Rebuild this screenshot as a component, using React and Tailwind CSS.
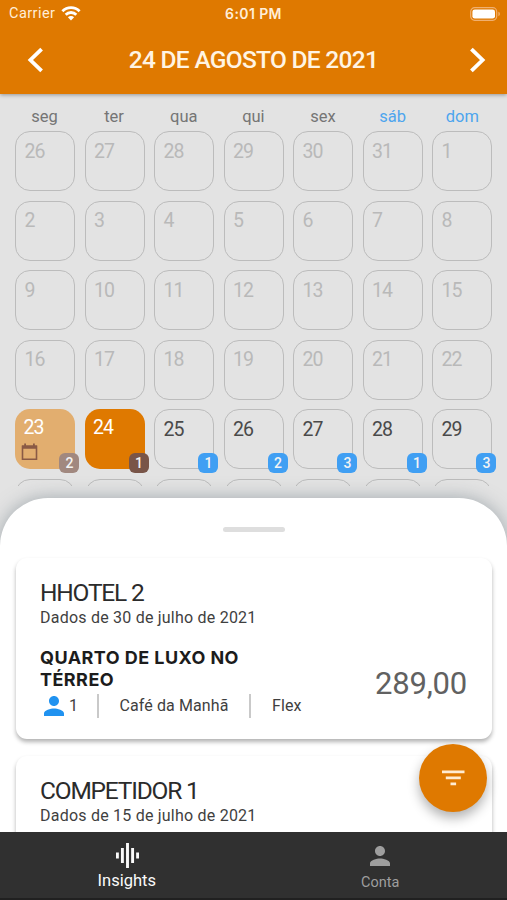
import React, { useState } from "react";
import { MdPerson } from "react-icons/md";

const WEEKDAYS = ["seg", "ter", "qua", "qui", "sex", "sáb", "dom"];

const DAYS = [
  26, 27, 28, 29, 30, 31, 1,
  2, 3, 4, 5, 6, 7, 8,
  9, 10, 11, 12, 13, 14, 15,
  16, 17, 18, 19, 20, 21, 22,
].map((day) => ({ day, type: "past" }));

const CURRENT_WEEK = [
  { day: 23, type: "today", count: 2 },
  { day: 24, type: "selected", count: 1 },
  { day: 25, type: "open", count: 1 },
  { day: 26, type: "open", count: 2 },
  { day: 27, type: "open", count: 3 },
  { day: 28, type: "open", count: 1 },
  { day: 29, type: "open", count: 3 },
];

// Placeholder cells that peek out above the sheet
const NEXT_WEEK = Array.from({ length: 7 }, () => ({ type: "open" }));

const CELL_STYLES = {
  past: "border border-[#bcbcbc] text-[#b9b9b9] pl-[8px] pt-[8.5px]",
  open: "border border-[#bcbcbc] text-[#4a4a4a] pl-[8px] pt-[8.5px]",
  today: "bg-[#e2ae6f] text-white pl-[8px] pt-[8px]",
  selected: "bg-[#df7900] text-white pl-[8px] pt-[8px]",
};

const BADGE_STYLES = {
  open: "bg-[#409ff3]",
  today: "bg-[#a1887f]",
  selected: "bg-[#795548]",
};

function StatusBar() {
  return (
    <div className="grid h-[27px] grid-cols-3 items-center pl-[9px] pr-[6px] text-[#ffeed8]">
      <div className="flex items-center gap-[6px] text-[14.5px] tracking-[0.45px]">
        Carrier
        <svg width="20" height="15" viewBox="0 0 20 15" fill="none" stroke="#fff" strokeWidth="2.8">
          <path d="M1.4 5.2a12.2 12.2 0 0 1 17.2 0" />
          <path d="M4.7 8.7a7.5 7.5 0 0 1 10.6 0" />
          <path d="M10 14.4 6.9 11.2a4.4 4.4 0 0 1 6.2 0z" fill="#fff" stroke="none" />
        </svg>
      </div>
      <div className="-ml-[3px] whitespace-nowrap text-center font-['Inter',sans-serif] text-[14px] font-semibold tracking-[0.4px]">
        6:01 PM
      </div>
      <div className="flex justify-end">
        <svg width="31" height="14" viewBox="0 0 31 14">
          <rect x="0.7" y="0.7" width="26" height="12.6" rx="4" fill="none" stroke="#f0b070" strokeWidth="1.2" />
          <rect x="2.4" y="2.4" width="22.6" height="9.2" rx="2.4" fill="#fff" />
          <path d="M28.4 4.8c2 .6 2 3.8 0 4.4z" fill="#f0b070" />
        </svg>
      </div>
    </div>
  );
}

function Header() {
  return (
    <header className="relative z-10 h-[94px] shrink-0 bg-[#df7900] shadow-[0_1px_4px_rgba(0,0,0,0.35)]">
      <StatusBar />
      <div className="flex h-[66px] items-center justify-between px-[27px]">
        <button type="button" aria-label="Dia anterior">
          <svg width="17" height="26" viewBox="0 0 17 26" fill="none" stroke="#fff" strokeWidth="3.8">
            <path d="M14.6 2.2 3.4 13l11.2 10.8" />
          </svg>
        </button>
        <h1 className="-ml-[6px] text-[24.5px] font-medium tracking-[-0.7px] text-[#fff4e3]">24 DE AGOSTO DE 2021</h1>
        <button type="button" aria-label="Próximo dia" className="-mr-[6px]">
          <svg width="17" height="26" viewBox="0 0 17 26" fill="none" stroke="#fff" strokeWidth="3.8">
            <path d="M2.4 2.2 13.6 13 2.4 23.8" />
          </svg>
        </button>
      </div>
    </header>
  );
}

function DayCell({ day, type, count }) {
  return (
    <div className={`relative h-[60px] rounded-[15px] text-[19.5px] leading-[22px] tracking-[-0.8px] ${CELL_STYLES[type]}`}>
      {day}
      {type === "today" && (
        <svg className="mt-[4px] -ml-[2px]" width="17" height="18" viewBox="0 0 17 18">
          <path d="M1.5 3.2h14v13h-14z" fill="none" stroke="#8a5a45" strokeWidth="1.6" />
          <path d="M1 2.6h15v3.2H1zM3.2 0.6h1.8v2.4H3.2zM12 0.6h1.8v2.4H12z" fill="#8a5a45" />
        </svg>
      )}
      {count && (
        <span
          className={`absolute flex h-5 w-5 items-center justify-center rounded-[6px] text-[14px] font-medium tracking-normal text-[#f3f3f3] ${BADGE_STYLES[type]} ${
            type === "open" ? "-bottom-[5px] -right-[5px]" : "-bottom-[4px] -right-[4px]"
          }`}
        >
          {count}
        </span>
      )}
    </div>
  );
}

function Calendar() {
  return (
    <section className="h-[392px] shrink-0 overflow-hidden pl-[15.4px] pr-[14.6px] pt-[12px]">
      <div className="-ml-[1px] grid grid-cols-7 gap-x-[9.5px] text-center text-[16.5px] leading-[22px] text-[#757575]">
        {WEEKDAYS.map((name, i) => (
          <span key={name} className={i > 4 ? "text-[#4da5ee]" : ""}>
            {name}
          </span>
        ))}
      </div>
      <div className="mt-[3px] grid grid-cols-7 gap-[9.5px]">
        {[...DAYS, ...CURRENT_WEEK, ...NEXT_WEEK].map((item, i) => (
          <DayCell key={i} {...item} />
        ))}
      </div>
    </section>
  );
}

function HotelCard({ name, date, children }) {
  return (
    <article className="h-[181px] shrink-0 rounded-[11px] bg-white pl-[24.5px] pr-[25px] pt-[21px] shadow-[0_3px_4px_rgba(0,0,0,0.3)]">
      <h2 className="text-[24.5px] leading-[28px] tracking-[-1.2px] text-[#2b2b2b]">{name}</h2>
      <p className="text-[16px] leading-[21px] tracking-[0.22px] text-[#3f3f3f]">{date}</p>
      {children}
    </article>
  );
}

function Sheet() {
  return (
    <section className="relative mt-[12px] flex min-h-0 flex-1 flex-col rounded-t-[48px] bg-white shadow-[0_0_18px_rgba(96,112,122,0.5)]">
      <div className="mx-auto mt-[28.5px] h-[5px] w-[62px] shrink-0 rounded-full bg-[#dedede]" />
      <div className="mt-[20.5px] flex min-h-0 flex-1 flex-col gap-[17px] overflow-hidden pl-[15.5px] pr-[15px] pt-[6px]">
        <HotelCard name="HHOTEL 2" date="Dados de 30 de julho de 2021">
          <div className="mt-[19px] flex items-center justify-between">
            <div>
              <h3 className="w-[220px] font-['Inter',sans-serif] text-[18px] font-bold leading-[22px] tracking-[0.45px] text-[#1c1c1c]">
                QUARTO DE LUXO NO TÉRREO
              </h3>
              <div className="mt-[3px] flex h-6 items-center text-[16px] text-[#3f3f3f]">
                <MdPerson className="ml-[-1px] h-[30px] w-[30px] text-[#2092f0]" />
                <span className="w-[28px]">1</span>
                <span className="h-6 w-[1.5px] bg-[#c9c9c9]" />
                <span className="px-[21px] tracking-[0.1px]">Café da Manhã</span>
                <span className="h-6 w-[1.5px] bg-[#c9c9c9]" />
                <span className="pl-[21px] tracking-[0.1px]">Flex</span>
              </div>
            </div>
            <span className="mt-[4px] text-[31px] tracking-[-0.2px] text-[#616161]">289,00</span>
          </div>
        </HotelCard>
        <HotelCard name="COMPETIDOR 1" date="Dados de 15 de julho de 2021" />
      </div>
      <button
        type="button"
        aria-label="Filtrar"
        className="absolute bottom-[20px] right-[20px] flex h-[68px] w-[68px] items-center justify-center rounded-full bg-[#df7900] text-[#ffecd2] shadow-[0_6px_12px_rgba(0,0,0,0.3)]"
      >
        <svg width="23" height="16" viewBox="0 0 23 16" fill="none" stroke="currentColor" strokeWidth="2.8">
          <path d="M0 1.8h22.5M3.8 7.8h15M8.5 13.8h5.6" />
        </svg>
      </button>
    </section>
  );
}

function BottomNav({ active, onChange }) {
  const color = (tab) => (active === tab ? "text-[#fafafa]" : "text-[#9e9e9e]");

  return (
    <nav className="relative z-10 grid h-[68px] shrink-0 grid-cols-2 border-b-2 border-[#202020] bg-[#303030]">
      <button type="button" onClick={() => onChange("insights")} className={`flex flex-col items-center pt-[11px] ${color("insights")}`}>
        <svg className="ml-[2px]" width="23" height="25" viewBox="0 0 23 25" fill="none" stroke="currentColor" strokeWidth="2.9">
          <path d="M1.4 9.6v5.8M6.4 5v15M11.5 0v25M16.6 5v15M21.6 9.6v5.8" />
        </svg>
        <span className="text-[16.5px] leading-[26px]">Insights</span>
      </button>
      <button type="button" onClick={() => onChange("conta")} className={`flex flex-col items-center pt-[9px] ${color("conta")}`}>
        <MdPerson className="h-[30px] w-[30px]" />
        <span className="text-[14.5px] leading-[23px]">Conta</span>
      </button>
    </nav>
  );
}

export default function App() {
  const [tab, setTab] = useState("insights");

  return (
    <div className="flex h-[900px] w-[507px] flex-col overflow-hidden bg-[#e3e3e3] font-['Roboto',sans-serif]">
      <Header />
      <Calendar />
      <Sheet />
      <BottomNav active={tab} onChange={setTab} />
    </div>
  );
}
